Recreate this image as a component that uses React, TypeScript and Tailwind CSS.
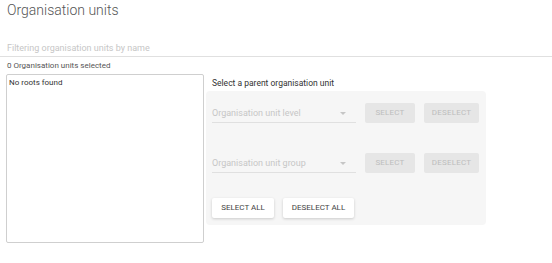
import React from "react";

function SelectField({ label }: { label: string }) {
  return (
    <div className="relative w-[144px] h-[20px] border-b border-[#e0e0e0] flex items-end pb-[3px]">
      <span className="text-[9px] leading-[12px] text-[#c6c6c6]">{label}</span>
      <span className="absolute right-[10px] top-[9px] w-0 h-0 border-l-[3px] border-r-[3px] border-t-[3px] border-l-transparent border-r-transparent border-t-[#c6c6c6]" />
    </div>
  );
}

function DisabledBtn({ children, w }: { children: React.ReactNode; w: string }) {
  return (
    <div className={`${w} h-[20px] bg-[#e6e6e6] rounded-[2px] flex items-center justify-center text-[8px] font-normal text-[#bdbdbd] tracking-[0.2px]`}>
      {children}
    </div>
  );
}

function RaisedBtn({ children, w }: { children: React.ReactNode; w: string }) {
  return (
    <div className={`${w} h-[20px] bg-white rounded-[2px] flex items-center justify-center text-[8px] font-normal text-[#444] shadow-[0_1px_3px_rgba(0,0,0,0.18)]`}>
      {children}
    </div>
  );
}

export default function App() {
  return (
    <div className="w-[552px] h-[263px] bg-white overflow-hidden" style={{ fontFamily: "Roboto, 'Liberation Sans', sans-serif" }}>
      <div className="pl-[7px] h-[20px] text-[14px] leading-[20px] font-light text-[#555]">Organisation units</div>
      <div className="mt-[22px] pl-[7px] pb-[2px] border-b border-[#e0e0e0] text-[9px] leading-[12px] text-[#c6c6c6]">
        Filtering organisation units by name
      </div>
      <div className="pl-[7px] mt-[4px] h-[12px] text-[8px] leading-[10px] text-[#555]">0 Organisation units selected</div>
      <div className="flex mt-[1px] pl-[6px] gap-[2px]">
        <div className="w-[198px] h-[169px] border border-[#cfcfcf] rounded-[2px] px-[2px] pt-[2px] text-[8px] leading-[11px] text-[#333]">
          No roots found
        </div>
        <div className="flex flex-col">
          <div className="pl-[6px] pt-[4px] h-[17px] text-[8.5px] leading-[10px] text-[#333]">Select a parent organisation unit</div>
          <div className="w-[280px] h-[134px] bg-[#f6f6f6] rounded-[4px] pl-[6px] pr-[6px] pt-[12px]">
            <div className="flex items-start">
              <SelectField label="Organisation unit level" />
              <div className="ml-[9px] flex gap-[9px]">
                <DisabledBtn w="w-[50px]">SELECT</DisabledBtn>
                <DisabledBtn w="w-[55px]">DESELECT</DisabledBtn>
              </div>
            </div>
            <div className="flex items-start mt-[30px]">
              <SelectField label="Organisation unit group" />
              <div className="ml-[9px] flex gap-[9px]">
                <DisabledBtn w="w-[50px]">SELECT</DisabledBtn>
                <DisabledBtn w="w-[55px]">DESELECT</DisabledBtn>
              </div>
            </div>
            <div className="flex gap-[9px] mt-[25px]">
              <RaisedBtn w="w-[62px]">SELECT ALL</RaisedBtn>
              <RaisedBtn w="w-[71px]">DESELECT ALL</RaisedBtn>
            </div>
          </div>
        </div>
      </div>
    </div>
  );
}
